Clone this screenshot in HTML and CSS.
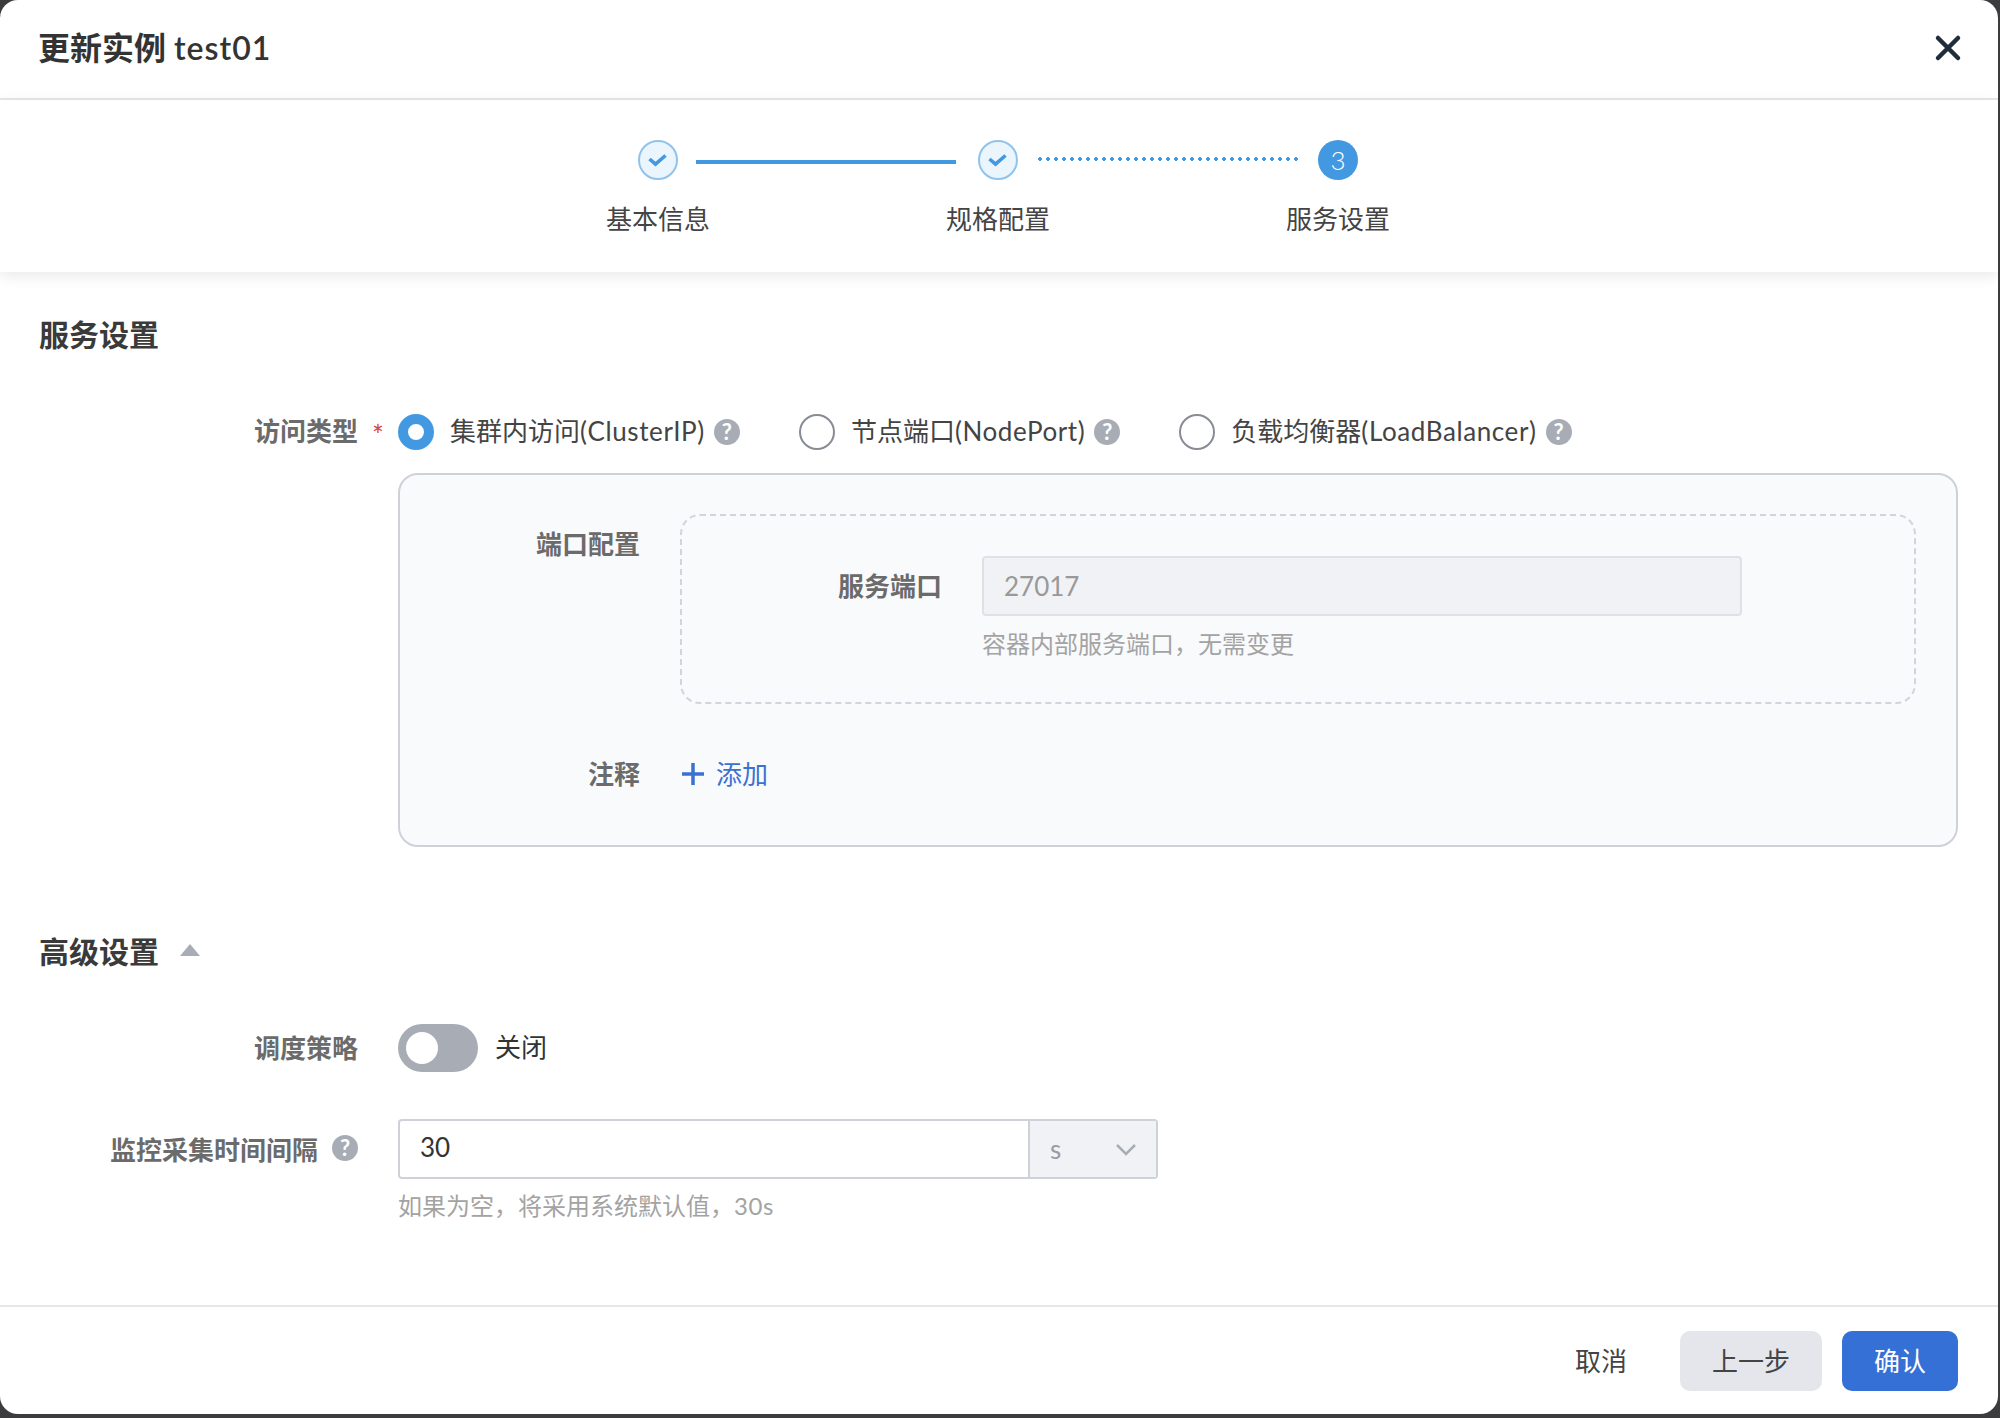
FILE: index.html
```html
<!DOCTYPE html>
<html lang="zh-CN">
<head>
    <meta charset="UTF-8">
    <title>更新实例 test01</title>
    <link rel="stylesheet" href="styles.css">
</head>
<body>
    <div class="modal">
        <div class="modal-header">
            <h1>更新实例 <span class="en">test01</span></h1>
            <svg class="close-icon" viewBox="0 0 24 24"><path d="M2 2 22 22M22 2 2 22"/></svg>
        </div>

        <div class="stepper">
            <div class="step-row">
                <span class="step-dot done"><svg viewBox="0 0 20 20"><path d="M1.5 9 7.5 14.2 17.5 5.5"/></svg></span>
                <span class="step-line solid"></span>
                <span class="step-dot done"><svg viewBox="0 0 20 20"><path d="M1.5 9 7.5 14.2 17.5 5.5"/></svg></span>
                <span class="step-line dotted"></span>
                <span class="step-dot current">3</span>
            </div>
            <div class="step-labels">
                <span>基本信息</span>
                <span>规格配置</span>
                <span>服务设置</span>
            </div>
        </div>

        <div class="modal-body">
            <h2 class="section-title">服务设置</h2>

            <div class="form-row radio-row">
                <label class="form-label">访问类型<span class="required">*</span></label>
                <div class="radio-group">
                    <div class="radio-item">
                        <span class="radio checked"></span>
                        <span class="radio-text">集群内访问<span class="en">(ClusterIP)</span></span>
                        <span class="help">?</span>
                    </div>
                    <div class="radio-item">
                        <span class="radio"></span>
                        <span class="radio-text">节点端口<span class="en">(NodePort)</span></span>
                        <span class="help">?</span>
                    </div>
                    <div class="radio-item">
                        <span class="radio"></span>
                        <span class="radio-text">负载均衡器<span class="en">(LoadBalancer)</span></span>
                        <span class="help">?</span>
                    </div>
                </div>
            </div>

            <div class="panel">
                <div class="panel-row">
                    <label class="panel-label">端口配置</label>
                    <div class="dashed-box">
                        <label class="dashed-label">服务端口</label>
                        <div class="dashed-control">
                            <div class="input disabled">27017</div>
                            <p class="hint">容器内部服务端口，无需变更</p>
                        </div>
                    </div>
                </div>
                <div class="panel-row annotation-row">
                    <label class="panel-label">注释</label>
                    <div class="add-link">
                        <svg viewBox="0 0 22 22"><path d="M11 0V22M0 11H22"/></svg>
                        <span>添加</span>
                    </div>
                </div>
            </div>

            <h2 class="section-title advanced-title">高级设置<span class="caret-up"></span></h2>

            <div class="form-row switch-row">
                <label class="form-label">调度策略</label>
                <span class="switch"><span class="switch-knob"></span></span>
                <span class="switch-text">关闭</span>
            </div>

            <div class="form-row interval-row">
                <label class="form-label">监控采集时间间隔<span class="help">?</span></label>
                <div>
                    <div class="input-group">
                        <div class="input-main">30</div>
                        <div class="input-addon">
                            <span>s</span>
                            <svg viewBox="0 0 20 11"><path d="M1 1 10 10 19 1"/></svg>
                        </div>
                    </div>
                    <p class="hint">如果为空，将采用系统默认值，<span class="en">30s</span></p>
                </div>
            </div>
        </div>

        <div class="modal-footer">
            <button class="btn btn-text">取消</button>
            <button class="btn btn-grey">上一步</button>
            <button class="btn btn-primary">确认</button>
        </div>
    </div>
</body>
</html>
```

FILE: styles.css
```css
* {
    margin: 0;
    padding: 0;
    box-sizing: border-box;
}

body {
    width: 2000px;
    height: 1418px;
    overflow: hidden;
    background: #3c3c3e;
    font-family: Lato, "Noto Sans CJK SC", sans-serif;
    font-size: 26px;
    color: #333;
}

.en {
    letter-spacing: 0.6px;
}

.modal {
    width: 1998px;
    height: 1414px;
    background: #fff;
    border-radius: 18px;
    display: flex;
    flex-direction: column;
    overflow: hidden;
}

/* header */
.modal-header {
    height: 100px;
    flex: none;
    display: flex;
    align-items: center;
    justify-content: space-between;
    padding: 0 38px 4px 38px;
    border-bottom: 2px solid #e6e7eb;
}

.modal-header h1 {
    font-size: 32px;
    font-weight: 600;
    color: #333;
    padding-bottom: 2px;
}

.modal-header .en {
    letter-spacing: 1px;
}

.close-icon {
    width: 24px;
    height: 24px;
    margin-top: 2px;
    fill: none;
    stroke: #1f2d3d;
    stroke-width: 4.5;
    stroke-linecap: round;
    overflow: visible;
}

/* stepper */
.stepper {
    height: 172px;
    flex: none;
    padding-top: 40px;
    box-shadow: 0 4px 14px rgba(0, 0, 0, 0.09);
    position: relative;
}

.step-row {
    display: flex;
    justify-content: center;
    align-items: center;
    margin-left: -2px;
}

.step-dot {
    width: 40px;
    height: 40px;
    border-radius: 50%;
    display: flex;
    align-items: center;
    justify-content: center;
}

.step-dot.done {
    background: #ebf5fd;
    border: 2px solid #90c3ec;
}

.step-dot svg {
    width: 20px;
    height: 20px;
    flex: none;
    fill: none;
    stroke: #4299e1;
    stroke-width: 3.6;
}

.step-dot.current {
    background: #4299e1;
    color: #fff;
    font-size: 26px;
    font-weight: 300;
}

.step-line {
    width: 260px;
    height: 4px;
    margin: 0 20px;
}

.step-line.solid {
    background: #4299e1;
    margin: 3px 22px 0 18px;
}

.step-line.dotted {
    margin-top: -2px;
    background: radial-gradient(circle, #4299e1 1.8px, transparent 2px) -2px 0 / 8px 4px repeat-x;
}

.step-labels {
    display: flex;
    justify-content: center;
    margin: 21px 0 0 -2px;
}

.step-labels span {
    width: 340px;
    text-align: center;
    line-height: 36px;
    color: #444;
}

/* form */
.modal-body {
    flex: 1;
    padding: 42px 40px 0;
}

.section-title {
    font-size: 30px;
    font-weight: 600;
    line-height: 40px;
    margin-left: -1px;
    color: #3a3a3a;
}

.form-row {
    display: flex;
    align-items: center;
}

.form-label {
    width: 318px;
    margin-right: 40px;
    font-weight: 600;
    color: #6b6b6b;
    text-align: right;
    position: relative;
    display: flex;
    justify-content: flex-end;
    align-items: center;
}

.required {
    position: absolute;
    right: -26px;
    top: 7px;
    color: #d64545;
    font-size: 28px;
    font-weight: 400;
}

.help {
    width: 26px;
    height: 26px;
    flex: none;
    border-radius: 50%;
    background: #a8adb5;
    color: #fff;
    font-size: 22px;
    font-weight: 700;
    line-height: 26px;
    text-align: center;
}

.form-label .help {
    margin-left: 14px;
}

.radio-row {
    height: 48px;
    margin-top: 54px;
}

.radio-row .form-label {
    padding-bottom: 5px;
}

.radio-group {
    display: flex;
}

.radio-item {
    display: flex;
    align-items: center;
    margin-right: 59px;
}

.radio {
    width: 36px;
    height: 36px;
    border-radius: 50%;
    border: 2px solid #888c94;
    margin-right: 16px;
    background: #fff;
}

.radio.checked {
    border: 10px solid #4299e1;
}

.radio-text {
    margin-right: 9px;
    padding-bottom: 5px;
    color: #444;
}

/* service panel */
.panel {
    margin: 17px 0 0 358px;
    height: 374px;
    background: #f9fafc;
    border: 2px solid #cfd1d9;
    border-radius: 20px;
    padding: 39px 40px 0 0;
}

.panel-row {
    display: flex;
}

.panel-label {
    width: 240px;
    margin-right: 40px;
    line-height: 60px;
    text-align: right;
    font-weight: 600;
    color: #6b6b6b;
}

.dashed-box {
    flex: 1;
    height: 190px;
    border: 2px dashed #d1d4da;
    border-radius: 20px;
    padding: 40px 0 0;
    display: flex;
}

.dashed-label {
    width: 260px;
    margin-right: 40px;
    line-height: 60px;
    text-align: right;
    font-weight: 600;
    color: #6b6b6b;
}

.dashed-control {
    width: 760px;
}

.input.disabled {
    height: 60px;
    line-height: 56px;
    padding-left: 20px;
    background: #f1f2f6;
    border: 2px solid #dfe1e7;
    border-radius: 4px;
    color: #999;
}

.hint {
    margin-top: 9px;
    font-size: 24px;
    line-height: 36px;
    color: #a3a3a3;
}

.dashed-control .hint {
    margin-top: 10px;
}

.annotation-row {
    margin-top: 40px;
}

.add-link {
    display: flex;
    align-items: center;
    margin-left: 2px;
    color: #3a72d2;
}

.add-link span {
    padding-bottom: 4px;
}

.add-link svg {
    width: 22px;
    height: 22px;
    margin-right: 12px;
    fill: none;
    stroke: #3a72d2;
    stroke-width: 3.5;
}

/* advanced */
.advanced-title {
    margin-top: 84px;
    display: flex;
    align-items: center;
}

.caret-up {
    width: 0;
    height: 0;
    margin: -3px 0 0 21px;
    border-left: 10px solid transparent;
    border-right: 10px solid transparent;
    border-bottom: 12px solid #a8adb5;
}

.switch-row {
    margin-top: 53px;
}

.switch-row .form-label {
    padding-bottom: 3px;
}

.switch {
    width: 80px;
    height: 48px;
    border-radius: 24px;
    background: #a8adb5;
    padding: 8px;
}

.switch-knob {
    display: block;
    width: 32px;
    height: 32px;
    border-radius: 50%;
    background: #fff;
}

.switch-text {
    margin-left: 17px;
    padding-bottom: 5px;
    color: #333;
}

.interval-row {
    margin-top: 47px;
    align-items: flex-start;
}

.interval-row .form-label {
    height: 60px;
    padding-bottom: 2px;
}

.input-group {
    width: 760px;
    height: 60px;
    display: flex;
    border: 2px solid #cfd1d9;
    border-radius: 4px;
}

.input-main {
    width: 628px;
    padding-left: 20px;
    line-height: 52px;
    color: #333;
}

.input-addon {
    flex: 1;
    display: flex;
    align-items: center;
    justify-content: space-between;
    padding: 0 20px 0 20px;
    background: #f1f2f6;
    border-left: 2px solid #cfd1d9;
    color: #9a9ca3;
}

.input-addon svg {
    width: 20px;
    height: 11px;
    fill: none;
    stroke: #a8adb5;
    stroke-width: 2.5;
    overflow: visible;
}

/* footer */
.modal-footer {
    height: 109px;
    flex: none;
    border-top: 2px solid #e6e7eb;
    padding: 24px 40px 0 0;
    display: flex;
    justify-content: flex-end;
    align-items: flex-start;
    gap: 20px;
}

.btn {
    height: 60px;
    border: none;
    border-radius: 10px;
    font-family: inherit;
    font-size: 26px;
    padding-bottom: 4px;
}

.btn-text {
    background: none;
    color: #444;
    margin-right: 33px;
}

.btn-grey {
    width: 142px;
    background: #e5e6eb;
    color: #444;
}

.btn-primary {
    width: 116px;
    background: #3570d6;
    color: #fff;
}
```
